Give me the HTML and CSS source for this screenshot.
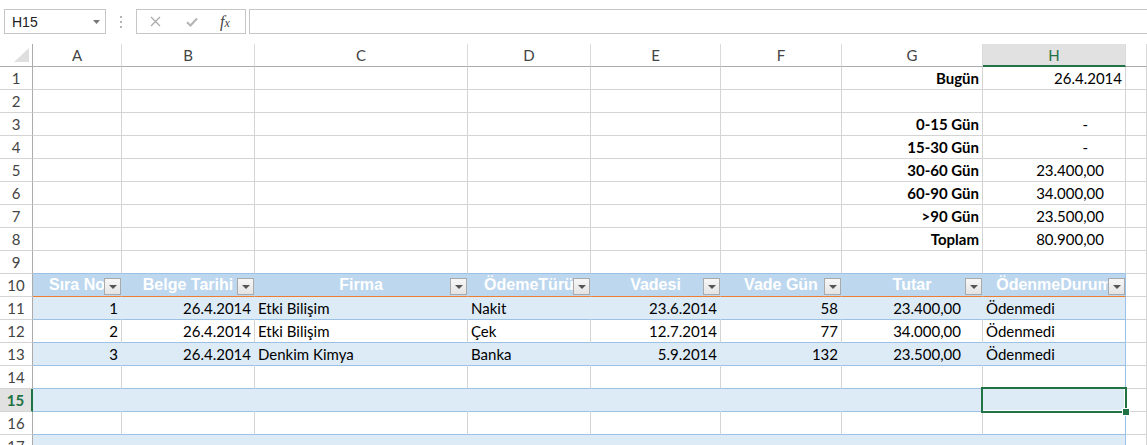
FILE: index.html
```
<!DOCTYPE html>
<html lang="tr">
<head>
    <meta charset="UTF-8">
    <title>Vade Analizi</title>
    <link rel="stylesheet" href="styles.css">
</head>
<body>
    <div class="fbar">
        <div class="namebox">
            <span>H15</span>
            <svg width="7" height="4" viewBox="0 0 7 4"><path d="M0 0H7L3.5 4Z" fill="#777"/></svg>
        </div>
        <div class="dots">
            <svg width="2" height="12" viewBox="0 0 2 12"><rect y="0" width="2" height="2" fill="#b4b4b4"/><rect y="5" width="2" height="2" fill="#b4b4b4"/><rect y="10" width="2" height="2" fill="#b4b4b4"/></svg>
        </div>
        <div class="fxbox">
            <svg class="ic-x" width="11" height="11" viewBox="0 0 11 11"><path d="M1 1L10 10M10 1L1 10" stroke="#ababab" stroke-width="1.3"/></svg>
            <svg class="ic-ok" width="12" height="10" viewBox="0 0 12 10"><path d="M1 5.2L4.5 8.5L11 1.5" stroke="#b4b4b4" stroke-width="2" fill="none"/></svg>
            <span class="fx">f<small>x</small></span>
        </div>
        <div class="finput"></div>
    </div>

    <div class="sheet">
        <div class="row cols">
            <div class="cell corner"><svg width="32" height="22" viewBox="0 0 32 22"><path d="M14 18H29V4Z" fill="#dfdfdf"/></svg></div>
            <div class="cell ch">A</div>
            <div class="cell ch">B</div>
            <div class="cell ch">C</div>
            <div class="cell ch">D</div>
            <div class="cell ch">E</div>
            <div class="cell ch">F</div>
            <div class="cell ch">G</div>
            <div class="cell ch sel">H</div>
            <div class="cell ch"></div>
        </div>

        <div class="row">
            <div class="cell rh">1</div>
            <div class="cell"></div><div class="cell"></div><div class="cell"></div><div class="cell"></div><div class="cell"></div><div class="cell"></div>
            <div class="cell r b">Bugün</div>
            <div class="cell r">26.4.2014</div>
            <div class="cell"></div>
        </div>
        <div class="row">
            <div class="cell rh">2</div>
            <div class="cell"></div><div class="cell"></div><div class="cell"></div><div class="cell"></div><div class="cell"></div><div class="cell"></div><div class="cell"></div><div class="cell"></div><div class="cell"></div>
        </div>
        <div class="row">
            <div class="cell rh">3</div>
            <div class="cell"></div><div class="cell"></div><div class="cell"></div><div class="cell"></div><div class="cell"></div><div class="cell"></div>
            <div class="cell r b">0-15 Gün</div>
            <div class="cell r dash">-</div>
            <div class="cell"></div>
        </div>
        <div class="row">
            <div class="cell rh">4</div>
            <div class="cell"></div><div class="cell"></div><div class="cell"></div><div class="cell"></div><div class="cell"></div><div class="cell"></div>
            <div class="cell r b">15-30 Gün</div>
            <div class="cell r dash">-</div>
            <div class="cell"></div>
        </div>
        <div class="row">
            <div class="cell rh">5</div>
            <div class="cell"></div><div class="cell"></div><div class="cell"></div><div class="cell"></div><div class="cell"></div><div class="cell"></div>
            <div class="cell r b">30-60 Gün</div>
            <div class="cell r acc">23.400,00</div>
            <div class="cell"></div>
        </div>
        <div class="row">
            <div class="cell rh">6</div>
            <div class="cell"></div><div class="cell"></div><div class="cell"></div><div class="cell"></div><div class="cell"></div><div class="cell"></div>
            <div class="cell r b">60-90 Gün</div>
            <div class="cell r acc">34.000,00</div>
            <div class="cell"></div>
        </div>
        <div class="row">
            <div class="cell rh">7</div>
            <div class="cell"></div><div class="cell"></div><div class="cell"></div><div class="cell"></div><div class="cell"></div><div class="cell"></div>
            <div class="cell r b">&gt;90 Gün</div>
            <div class="cell r acc">23.500,00</div>
            <div class="cell"></div>
        </div>
        <div class="row">
            <div class="cell rh">8</div>
            <div class="cell"></div><div class="cell"></div><div class="cell"></div><div class="cell"></div><div class="cell"></div><div class="cell"></div>
            <div class="cell r b">Toplam</div>
            <div class="cell r acc">80.900,00</div>
            <div class="cell"></div>
        </div>
        <div class="row above">
            <div class="cell rh">9</div>
            <div class="cell tc"></div><div class="cell tc"></div><div class="cell tc"></div><div class="cell tc"></div><div class="cell tc"></div><div class="cell tc"></div><div class="cell tc"></div><div class="cell tc"></div>
            <div class="cell"></div>
        </div>

        <div class="row thead">
            <div class="cell rh">10</div>
            <div class="cell tc th">Sıra No<span class="filter"></span></div>
            <div class="cell tc th">Belge Tarihi<span class="filter"></span></div>
            <div class="cell tc th">Firma<span class="filter"></span></div>
            <div class="cell tc th">ÖdemeTürü<span class="filter"></span></div>
            <div class="cell tc th">Vadesi<span class="filter"></span></div>
            <div class="cell tc th">Vade Gün<span class="filter"></span></div>
            <div class="cell tc th">Tutar<span class="filter"></span></div>
            <div class="cell tc th last">ÖdenmeDurum<span class="filter"></span></div>
            <div class="cell"></div>
        </div>
        <div class="row band">
            <div class="cell rh">11</div>
            <div class="cell tc r">1</div>
            <div class="cell tc r">26.4.2014</div>
            <div class="cell tc">Etki Bilişim</div>
            <div class="cell tc">Nakit</div>
            <div class="cell tc r">23.6.2014</div>
            <div class="cell tc r">58</div>
            <div class="cell tc r acc">23.400,00</div>
            <div class="cell tc last">Ödenmedi</div>
            <div class="cell"></div>
        </div>
        <div class="row plain">
            <div class="cell rh">12</div>
            <div class="cell tc r">2</div>
            <div class="cell tc r">26.4.2014</div>
            <div class="cell tc">Etki Bilişim</div>
            <div class="cell tc">Çek</div>
            <div class="cell tc r">12.7.2014</div>
            <div class="cell tc r">77</div>
            <div class="cell tc r acc">34.000,00</div>
            <div class="cell tc last">Ödenmedi</div>
            <div class="cell"></div>
        </div>
        <div class="row band">
            <div class="cell rh">13</div>
            <div class="cell tc r">3</div>
            <div class="cell tc r">26.4.2014</div>
            <div class="cell tc">Denkim Kimya</div>
            <div class="cell tc">Banka</div>
            <div class="cell tc r">5.9.2014</div>
            <div class="cell tc r">132</div>
            <div class="cell tc r acc">23.500,00</div>
            <div class="cell tc last">Ödenmedi</div>
            <div class="cell"></div>
        </div>
        <div class="row plain">
            <div class="cell rh">14</div>
            <div class="cell tc"></div><div class="cell tc"></div><div class="cell tc"></div><div class="cell tc"></div><div class="cell tc"></div><div class="cell tc"></div><div class="cell tc"></div>
            <div class="cell tc last"></div>
            <div class="cell"></div>
        </div>
        <div class="row band">
            <div class="cell rh sel">15</div>
            <div class="cell tc"></div><div class="cell tc"></div><div class="cell tc"></div><div class="cell tc"></div><div class="cell tc"></div><div class="cell tc"></div><div class="cell tc"></div>
            <div class="cell tc last active"><span class="cursor"></span><span class="handle"></span></div>
            <div class="cell"></div>
        </div>
        <div class="row plain">
            <div class="cell rh">16</div>
            <div class="cell tc"></div><div class="cell tc"></div><div class="cell tc"></div><div class="cell tc"></div><div class="cell tc"></div><div class="cell tc"></div><div class="cell tc"></div>
            <div class="cell tc last"></div>
            <div class="cell"></div>
        </div>
        <div class="row band">
            <div class="cell rh">17</div>
            <div class="cell tc"></div><div class="cell tc"></div><div class="cell tc"></div><div class="cell tc"></div><div class="cell tc"></div><div class="cell tc"></div><div class="cell tc"></div>
            <div class="cell tc last"></div>
            <div class="cell"></div>
        </div>
    </div>
</body>
</html>
```

FILE: styles.css
```
html, body {
    margin: 0;
    height: 100%;
    overflow: hidden;
    background: #ffffff;
}

body {
    font-family: Lato, "Open Sans", sans-serif;
    font-size: 15px;
    color: #000;
}

/* formula bar */
.fbar {
    display: flex;
    align-items: flex-start;
    height: 44px;
    box-sizing: border-box;
    padding: 9px 0 0 4px;
}

.namebox {
    width: 102px;
    height: 25px;
    box-sizing: border-box;
    border: 1px solid #c6c6c6;
    display: flex;
    align-items: center;
    justify-content: space-between;
    padding: 0 5px 0 7px;
    font-family: "Liberation Sans", Arial, sans-serif;
    font-size: 14px;
    color: #222;
}

.dots {
    width: 30px;
    height: 25px;
    display: flex;
    align-items: center;
    justify-content: center;
}

.fxbox {
    width: 110px;
    height: 25px;
    box-sizing: border-box;
    border: 1px solid #c6c6c6;
    display: flex;
    align-items: center;
    padding-left: 13px;
}

.ic-ok {
    margin-left: 25px;
}

.fx {
    margin-left: 22px;
    font-family: "Liberation Serif", serif;
    font-style: italic;
    font-size: 16px;
    color: #444;
    line-height: 1;
}

.fx small {
    font-size: 12px;
}

.finput {
    flex: 1;
    height: 25px;
    box-sizing: border-box;
    border: 1px solid #c6c6c6;
    margin-left: 3px;
    margin-right: -2px;
}

/* grid */
.row {
    display: grid;
    grid-template-columns: 33px 89px 133px 213px 123px 130px 121px 141px 143px 1fr;
    height: 23px;
}

.cell {
    position: relative;
    box-sizing: border-box;
    height: 23px;
    padding: 0 3px;
    line-height: 22px;
    border-right: 1px solid #d4d4d4;
    border-bottom: 1px solid #d4d4d4;
    white-space: nowrap;
    overflow: hidden;
}

.r { text-align: right; }
.b { font-weight: bold; }
.acc { padding-right: 21px; }
.dash { padding-right: 37px; }

.cols .cell {
    text-align: center;
    color: #444;
    border-right-color: #dadada;
    border-bottom-color: #ababab;
}

.cols .corner {
    padding: 0;
    border-right-color: #ababab;
}

.corner svg {
    display: block;
}

.cols .sel {
    background: #e1e1e1;
    color: #217346;
    border-bottom: 2px solid #217346;
}

.rh {
    padding: 0;
    text-align: center;
    color: #444;
    border-right-color: #ababab;
}

.rh.sel {
    background: #e1e1e1;
    color: #217346;
    font-weight: bold;
    border-right: 2px solid #217346;
}

/* table */
.above .tc { border-bottom-color: #9bc2e6; }
.plain .tc { border-bottom-color: #9bc2e6; }

.band .tc {
    background: #ddebf7;
    border-right-color: #ddebf7;
    border-bottom-color: #9bc2e6;
}

.thead .tc {
    background: #bdd7ee;
    border-right-color: #bdd7ee;
    border-bottom-color: #ed7d31;
}

.th {
    text-align: center;
    color: #ffffff;
    font-family: "Liberation Sans", Arial, sans-serif;
    font-weight: bold;
    font-size: 16px;
}

.row .tc.last { border-right-color: #9bc2e6; }

.filter {
    position: absolute;
    top: 4px;
    right: 0;
    width: 17px;
    height: 17px;
    box-sizing: border-box;
    border: 1px solid #a9a9a9;
    background: linear-gradient(#f7f7f7, #e4e4e4);
}

.filter::after {
    content: "";
    position: absolute;
    left: 4px;
    top: 6px;
    border-left: 4px solid transparent;
    border-right: 4px solid transparent;
    border-top: 4px solid #555;
}

/* active cell */
.cell.active {
    overflow: visible;
}

.cursor {
    position: absolute;
    z-index: 2;
    left: -2px;
    top: -2px;
    right: -2px;
    bottom: -2px;
    border: 2px solid #217346;
    box-shadow: inset -1px -1px 0 #fff;
}

.handle {
    position: absolute;
    z-index: 3;
    right: -4px;
    bottom: -4px;
    width: 6px;
    height: 6px;
    background: #217346;
    outline: 1px solid #fff;
}
```
